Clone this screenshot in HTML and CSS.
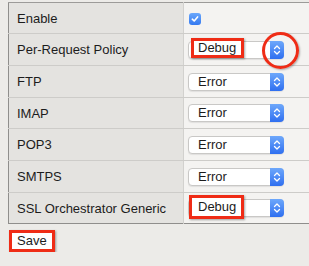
FILE: index.html
```html
<!DOCTYPE html>
<html lang="en">

<head>
  <meta charset="UTF-8" />
  <meta name="viewport" content="width=device-width, initial-scale=1.0" />
  <title>Debug Logging</title>
  <link rel="stylesheet" href="styles.css">
</head>

<body>
  <form class="log-form">
    <table class="settings">
      <tr>
        <td class="label">Enable</td>
        <td class="value"><span class="checkbox"><svg viewBox="0 0 12 12" width="12" height="12"><path d="M3.3 6.2 L5.2 8 L8.6 3.9" fill="none" stroke="#fff" stroke-width="1.6" stroke-linecap="round" stroke-linejoin="round"/></svg></span></td>
      </tr>
      <tr>
        <td class="label">Per-Request Policy</td>
        <td class="value">
          <div class="select">
            <span class="select-text callout callout-top">Debug</span>
            <span class="stepper"><svg viewBox="0 0 14 18" width="14" height="18"><path d="M4.5 7.5 L7 5 L9.5 7.5 M4.5 10.5 L7 13 L9.5 10.5" fill="none" stroke="#fff" stroke-width="1.3" stroke-linecap="round" stroke-linejoin="round"/></svg></span>
            <span class="ring"></span>
          </div>
        </td>
      </tr>
      <tr>
        <td class="label">FTP</td>
        <td class="value">
          <div class="select">
            <span class="select-text">Error</span>
            <span class="stepper"><svg viewBox="0 0 14 18" width="14" height="18"><path d="M4.5 7.5 L7 5 L9.5 7.5 M4.5 10.5 L7 13 L9.5 10.5" fill="none" stroke="#fff" stroke-width="1.3" stroke-linecap="round" stroke-linejoin="round"/></svg></span>
          </div>
        </td>
      </tr>
      <tr>
        <td class="label">IMAP</td>
        <td class="value">
          <div class="select">
            <span class="select-text">Error</span>
            <span class="stepper"><svg viewBox="0 0 14 18" width="14" height="18"><path d="M4.5 7.5 L7 5 L9.5 7.5 M4.5 10.5 L7 13 L9.5 10.5" fill="none" stroke="#fff" stroke-width="1.3" stroke-linecap="round" stroke-linejoin="round"/></svg></span>
          </div>
        </td>
      </tr>
      <tr>
        <td class="label">POP3</td>
        <td class="value">
          <div class="select">
            <span class="select-text">Error</span>
            <span class="stepper"><svg viewBox="0 0 14 18" width="14" height="18"><path d="M4.5 7.5 L7 5 L9.5 7.5 M4.5 10.5 L7 13 L9.5 10.5" fill="none" stroke="#fff" stroke-width="1.3" stroke-linecap="round" stroke-linejoin="round"/></svg></span>
          </div>
        </td>
      </tr>
      <tr>
        <td class="label">SMTPS</td>
        <td class="value">
          <div class="select">
            <span class="select-text">Error</span>
            <span class="stepper"><svg viewBox="0 0 14 18" width="14" height="18"><path d="M4.5 7.5 L7 5 L9.5 7.5 M4.5 10.5 L7 13 L9.5 10.5" fill="none" stroke="#fff" stroke-width="1.3" stroke-linecap="round" stroke-linejoin="round"/></svg></span>
          </div>
        </td>
      </tr>
      <tr>
        <td class="label">SSL Orchestrator Generic</td>
        <td class="value">
          <div class="select">
            <span class="select-text callout callout-bottom">Debug</span>
            <span class="stepper"><svg viewBox="0 0 14 18" width="14" height="18"><path d="M4.5 7.5 L7 5 L9.5 7.5 M4.5 10.5 L7 13 L9.5 10.5" fill="none" stroke="#fff" stroke-width="1.3" stroke-linecap="round" stroke-linejoin="round"/></svg></span>
          </div>
        </td>
      </tr>
    </table>

    <div class="actions">
      <button type="submit" class="save-button">Save</button>
    </div>
  </form>
</body>

</html>
```

FILE: styles.css
```css
html,
body {
  overflow: hidden;
}

body {
  font-family: "Liberation Sans", Arial, sans-serif;
  font-size: 13px;
  color: #1c1c1c;
  margin: 0;
  padding: 2px 0 0 8px;
  background-color: #ecebe8;
}

.settings {
  width: 301px;
  border-collapse: collapse;
  border-top: 1px solid #9c9b99;
  border-bottom: 1px solid #8f8e8c;
  border-left: 1px solid #8f8e8c;
}

.settings td {
  height: 31px;
  padding: 0;
  border-bottom: 1px solid #cdccc9;
  vertical-align: middle;
}

.settings tr:nth-child(3n+1) td {
  height: 30px;
}

.settings tr:last-child td {
  border-bottom: none;
}

.label {
  width: 166px;
  padding-left: 8px !important;
  background: #e4e3e0;
  border-right: 1px solid #d2d1ce;
}

.value {
  padding-left: 4px !important;
  background: #f4f3f1;
}

.checkbox {
  display: block;
  width: 12px;
  height: 12px;
  margin: 1px 0 0 1px;
  border-radius: 3px;
  background: linear-gradient(#6aa7fb, #3479f0);
}

.checkbox svg {
  display: block;
}

.select {
  position: relative;
  display: flex;
  align-items: center;
  width: 96px;
  height: 18px;
  box-sizing: border-box;
  border: 1px solid #c9c8c6;
  border-radius: 4px;
  background: #fff;
  box-shadow: 0 1px 1px rgba(0, 0, 0, 0.08);
}

.select-text {
  flex: 1;
  padding-left: 9px;
  line-height: 16px;
}

.stepper {
  width: 14px;
  height: 18px;
  margin: -1px -1px -1px auto;
  border-radius: 0 4px 4px 0;
  background: linear-gradient(#6ea8fb, #2f6ff0);
}

.stepper svg {
  display: block;
}

/* annotation marks drawn on top of the form */
.ring {
  position: absolute;
  left: 73px;
  top: -10px;
  width: 31px;
  height: 31px;
  border: 3px solid #ef2c16;
  border-radius: 50%;
  box-shadow: 1px 1px 2px rgba(0, 0, 0, 0.3);
}

.callout {
  position: absolute;
  box-sizing: border-box;
  padding-left: 4px;
  border: 3px solid #ef2c16;
  background: #fff;
  box-shadow: 1px 1px 2px rgba(0, 0, 0, 0.35);
  line-height: 14px;
}

.callout-top {
  left: 2px;
  top: -4px;
  width: 53px;
  height: 20px;
}

.callout-bottom {
  left: 0;
  top: -5px;
  width: 55px;
  height: 24px;
  padding-top: 2px;
  padding-left: 6px;
}

.actions {
  padding: 6px 0 0 1px;
}

.save-button {
  font-family: inherit;
  font-size: 13px;
  color: #1c1c1c;
  height: 22px;
  padding: 0 5px;
  border: 3px solid #ef2c16;
  background: #fff;
  box-shadow: 1px 1px 2px rgba(0, 0, 0, 0.35);
  line-height: 14px;
}
```
